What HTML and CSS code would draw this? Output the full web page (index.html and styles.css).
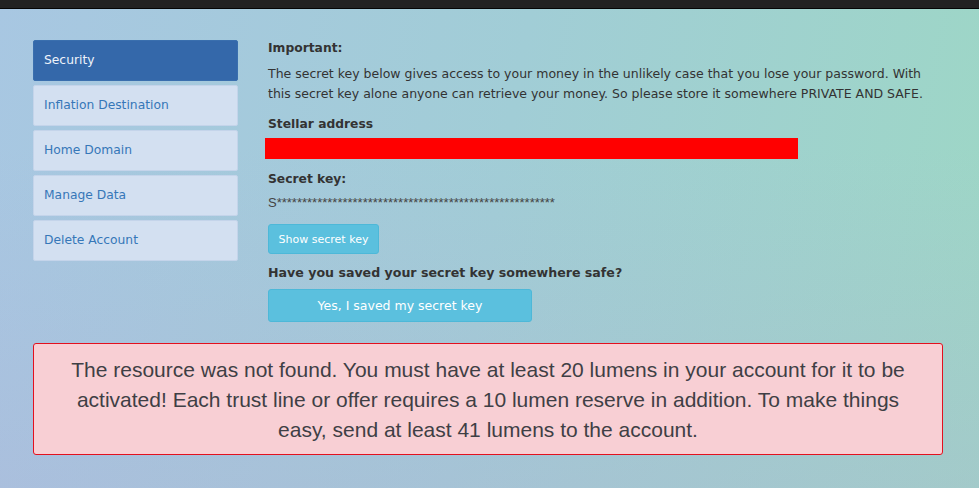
FILE: index.html
```html
<!DOCTYPE html>
<html>
<head>
<meta charset="utf-8">
<link rel="stylesheet" href="styles.css">
</head>
<body>
<div class="topbar"></div>
<main class="page">
  <div class="row">
    <nav class="sidebar">
      <a class="item active">Security</a>
      <a class="item">Inflation Destination</a>
      <a class="item">Home Domain</a>
      <a class="item">Manage Data</a>
      <a class="item">Delete Account</a>
    </nav>
    <section class="content">
      <h4 class="label first">Important:</h4>
      <p class="text">The secret key below gives access to your money in the unlikely case that you lose your password. With this secret key alone anyone can retrieve your money. So please store it somewhere PRIVATE AND SAFE.</p>
      <h4 class="label">Stellar address</h4>
      <div class="redacted"></div>
      <h4 class="label">Secret key:</h4>
      <div class="secret">S*******************************************************</div>
      <button class="btn btn-show">Show secret key</button>
      <h4 class="label q">Have you saved your secret key somewhere safe?</h4>
      <button class="btn btn-yes">Yes, I saved my secret key</button>
    </section>
  </div>
  <div class="alert">The resource was not found. You must have at least 20 lumens in your account for it to be activated! Each trust line or offer requires a 10 lumen reserve in addition. To make things easy, send at least 41 lumens to the account.</div>
</main>
</body>
</html>
```

FILE: styles.css
```css
html, body {
  margin: 0;
  padding: 0;
  height: 100%;
}
body {
  font-family: "DejaVu Sans", sans-serif;
  font-size: 12px;
  color: #333;
  background:
    linear-gradient(to top, rgba(178, 168, 214, 0.28), rgba(178, 168, 214, 0) 70%),
    linear-gradient(100deg, #a8c7e2 0%, #a1cdd6 50%, #9dd7c5 100%);
  min-height: 488px;
}
.topbar {
  height: 8px;
  background: #222;
  border-bottom: 1px solid #050505;
}
.page {
  width: 910px;
  padding: 29px 0 0 33px;
}
.row {
  display: flex;
  align-items: flex-start;
  gap: 30px;
}
.sidebar {
  width: 205px;
  flex: none;
  margin-top: 2px;
  display: flex;
  flex-direction: column;
  gap: 4px;
}
.item {
  display: block;
  height: 39px;
  line-height: 39px;
  padding: 0 10px;
  background: #d3e0f1;
  border: 1px solid #c4d4ea;
  border-radius: 2px;
  color: #3677b8;
  font-size: 12.3px;
}
.item.active {
  background: #3468aa;
  border-color: #3a6fae;
  color: #eef3fa;
}
.content {
  flex: 1;
}
.label {
  margin: 10px 0 0;
  font-size: 12.3px;
  font-weight: bold;
  line-height: 20px;
  color: #333;
}
.label.first {
  margin-top: 0;
}
.text {
  margin: 6px 0 0;
  line-height: 20px;
  font-size: 12.5px;
}
.redacted {
  margin: 4px 0 0 -3px;
  width: 533px;
  height: 21px;
  background: #ff0000;
}
.secret {
  margin-top: 4px;
  font-family: "Liberation Sans", Arial, sans-serif;
  font-size: 13px;
  line-height: 20px;
  color: #444;
}
.btn {
  display: block;
  font-family: "DejaVu Sans", sans-serif;
  color: #fff;
  background: #5bc0de;
  border: 1px solid #4db8d8;
  border-radius: 3px;
  padding: 0;
}
.btn-show {
  margin-top: 11px;
  width: 111px;
  height: 30px;
  font-size: 11px;
}
.label.q {
  margin-top: 9px;
  font-size: 12.6px;
}
.btn-yes {
  margin-top: 6px;
  width: 264px;
  height: 33px;
  font-size: 12.5px;
}
.alert {
  margin-top: 21px;
  box-sizing: border-box;
  width: 910px;
  height: 112px;
  padding: 11px 30px 9px;
  background: #f8cfd4;
  border: 1px solid #e3101e;
  border-radius: 3px;
  font-family: "Liberation Sans", Arial, sans-serif;
  font-size: 21px;
  line-height: 30px;
  color: #3f3f45;
  text-align: center;
}
```
